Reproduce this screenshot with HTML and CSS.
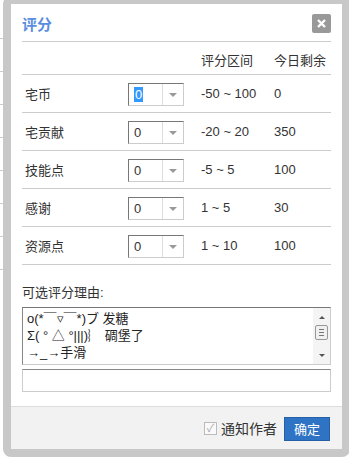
FILE: index.html
```html
<!DOCTYPE html>
<html lang="zh-CN">
<head>
    <meta charset="UTF-8">
    <title>评分</title>
    <link rel="stylesheet" href="styles.css">
</head>
<body>
    <div class="page">
        <div class="page-row">-</div>
        <div class="page-row">-</div>
        <div class="page-row">-</div>
        <div class="page-row">-</div>
        <div class="page-row">-</div>
        <div class="page-row link">字</div>
        <div class="page-row">亘(</div>
        <div class="page-row link">分</div>
    </div>

    <div class="frame">
        <div class="dialog">
            <div class="dialog-head">
                <h3>评分</h3>
                <span class="close">
                    <svg width="9" height="9" viewBox="0 0 9 9"><path d="M1 1L8 8M8 1L1 8" stroke="#fff" stroke-width="2.4"/></svg>
                </span>
            </div>
            <div class="rate-table">
                <div class="rate-row head">
                    <span></span><span></span><span>评分区间</span><span>今日剩余</span>
                </div>
                <div class="rate-row">
                    <span class="name">宅币</span>
                    <span class="select"><span class="val"><em>0</em></span><span class="arr"></span></span>
                    <span>-50 ~ 100</span><span>0</span>
                </div>
                <div class="rate-row">
                    <span class="name">宅贡献</span>
                    <span class="select"><span class="val">0</span><span class="arr"></span></span>
                    <span>-20 ~ 20</span><span>350</span>
                </div>
                <div class="rate-row">
                    <span class="name">技能点</span>
                    <span class="select"><span class="val">0</span><span class="arr"></span></span>
                    <span>-5 ~ 5</span><span>100</span>
                </div>
                <div class="rate-row">
                    <span class="name">感谢</span>
                    <span class="select"><span class="val">0</span><span class="arr"></span></span>
                    <span>1 ~ 5</span><span>30</span>
                </div>
                <div class="rate-row">
                    <span class="name">资源点</span>
                    <span class="select"><span class="val">0</span><span class="arr"></span></span>
                    <span>1 ~ 10</span><span>100</span>
                </div>
            </div>
            <div class="reason-label">可选评分理由:</div>
            <div class="reason-list">
                <div class="reason-items">
                    <div>o(*￣▿￣*)ブ 发糖</div>
                    <div>Σ( ° △ °|||)︴ 碉堡了</div>
                    <div>→_→手滑</div>
                </div>
                <div class="scroll">
                    <span class="up"></span>
                    <span class="thumb"></span>
                    <span class="down"></span>
                </div>
            </div>
            <div class="reason-input"></div>
            <div class="dialog-foot">
                <span class="check">&#x2713;</span>
                <span class="notify">通知作者</span>
                <button class="ok">确定</button>
            </div>
        </div>
    </div>
</body>
</html>
```

FILE: styles.css
```css
* {
    box-sizing: border-box;
}
body {
    margin: 0;
    background: #fff;
    font-family: 'Liberation Sans', 'Noto Sans CJK SC', sans-serif;
    font-size: 13px;
    color: #333;
    width: 349px;
    height: 458px;
    overflow: hidden;
    position: relative;
}
.page {
    padding-top: 6px;
}
.page-row {
    height: 33px;
    line-height: 32px;
    border-bottom: 1px solid #ccc;
    padding-left: 4px;
    font-size: 12px;
    color: #333;
}
.page-row.link {
    color: #3366cc;
}
.frame {
    position: absolute;
    left: 3px;
    top: -4px;
    width: 347px;
    padding: 8px;
    background: #c8c8c8;
    border-radius: 8px;
}
.dialog {
    background: #fff;
    width: 331px;
    padding: 0 11px;
    position: relative;
}
.dialog-head {
    height: 38px;
    display: flex;
    align-items: center;
    justify-content: space-between;
    border-bottom: 1px solid #ccc;
}
.dialog-head h3 {
    margin: 0;
    font-size: 15px;
    font-weight: bold;
    color: #5b8ee0;
    padding-top: 1px;
}
.close {
    width: 19px;
    height: 19px;
    border-radius: 2px;
    background: #999;
    display: flex;
    align-items: center;
    justify-content: center;
    margin-right: 0;
    margin-top: 2px;
}
.rate-row {
    display: grid;
    grid-template-columns: 106px 73px 73px 1fr;
    align-items: center;
    height: 38px;
    border-bottom: 1px solid #ccc;
    font-size: 13px;
}
.rate-row.head {
    height: 33px;
    padding-top: 2px;
}
.rate-row .name {
    padding-left: 3px;
}
.select {
    display: flex;
    width: 56px;
    height: 23px;
    border: 1px solid #ccc;
    border-top-color: #777;
    border-left-color: #777;
    margin-top: 1px;
}
.val {
    width: 34px;
    border-right: 1px solid #ddd;
    padding-left: 5px;
    line-height: 21px;
}
.val em {
    font-style: normal;
    background: #3399ff;
    color: #fff;
    padding: 0 1px;
}
.arr {
    flex: 1;
    display: flex;
    align-items: center;
    justify-content: center;
}
.arr::after {
    content: "";
    border-left: 4px solid transparent;
    border-right: 4px solid transparent;
    border-top: 4px solid #999;
    margin-top: 1px;
}
.reason-label {
    padding-top: 17px;
    height: 42px;
    font-size: 13px;
}
.reason-list {
    display: flex;
    height: 58px;
    border: 1px solid #ccc;
    border-top-color: #777;
    border-left-color: #888;
}
.reason-items {
    flex: 1;
    padding: 2px 0 0 4px;
    font-size: 13px;
    color: #222;
}
.reason-items div {
    height: 17px;
    line-height: 17px;
    overflow: hidden;
    white-space: nowrap;
}
.scroll {
    width: 17px;
    display: flex;
    flex-direction: column;
    align-items: center;
    background: #f4f4f4;
    padding: 4px 0;
}
.up, .down {
    height: 10px;
    display: flex;
    align-items: center;
}
.up::after {
    content: "";
    border-left: 3px solid transparent;
    border-right: 3px solid transparent;
    border-bottom: 3px solid #555;
}
.down::after {
    content: "";
    border-left: 3px solid transparent;
    border-right: 3px solid transparent;
    border-top: 3px solid #555;
}
.thumb {
    width: 13px;
    height: 15px;
    margin: 3px 0 auto;
    border: 1px solid #999;
    border-radius: 2px;
    background: repeating-linear-gradient(#777 0 1px, transparent 1px 3px) 3px 3px / 5px 7px no-repeat, #f0f0f0;
}
.reason-input {
    margin-top: 4px;
    height: 23px;
    border: 1px solid #ccc;
    border-top-color: #888;
}
.dialog-foot {
    margin: 14px -11px 0;
    height: 43px;
    background: #f2f2f2;
    border-top: 1px solid #ddd;
    display: flex;
    align-items: center;
    justify-content: flex-end;
    padding-right: 12px;
}
.check {
    width: 13px;
    height: 13px;
    border: 1px solid #bbb;
    background: #fafafa;
    color: #aaa;
    font-size: 11px;
    line-height: 11px;
    text-align: center;
    margin-right: 4px;
}
.notify {
    font-size: 14px;
    color: #333;
    margin-right: 7px;
}
.ok {
    width: 46px;
    height: 24px;
    background: #2f73c4;
    border: 1px solid #245fa8;
    color: #fff;
    font-family: inherit;
    font-size: 13px;
    padding: 0;
    margin-top: 1px;
}
```
